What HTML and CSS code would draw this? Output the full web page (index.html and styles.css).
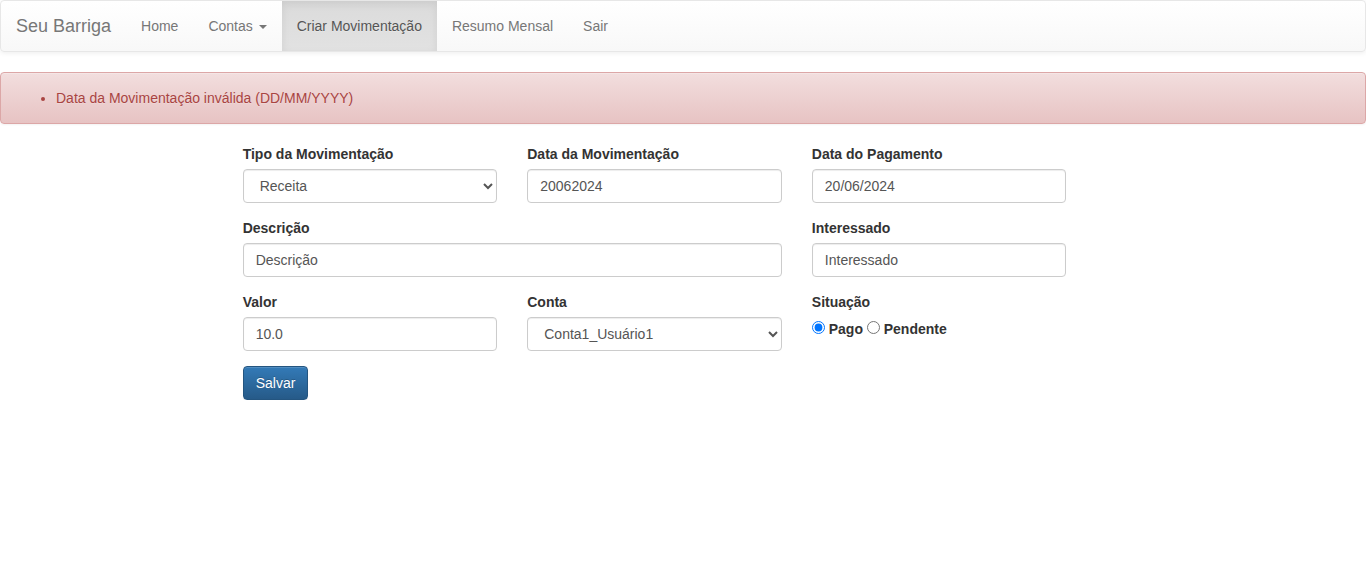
FILE: index.html
```html
<!DOCTYPE html>
<html lang="pt-BR">
<head>
<meta charset="utf-8">
<meta name="viewport" content="width=device-width, initial-scale=1">
<title>Seu Barriga - Movimentações</title>
<link rel="stylesheet" href="styles.css">
</head>
<body>
<nav class="navbar">
  <a class="brand" href="#">Seu Barriga</a>
  <ul class="nav">
    <li><a class="nav-link" href="#">Home</a></li>
    <li><a class="nav-link" href="#">Contas <span class="caret"></span></a></li>
    <li><a class="nav-link active" href="#" aria-current="page">Criar Movimentação</a></li>
    <li><a class="nav-link" href="#">Resumo Mensal</a></li>
    <li><a class="nav-link" href="#">Sair</a></li>
  </ul>
</nav>
<div class="alert" role="alert">
  <ul class="alert-list">
    <li>Data da Movimentação inválida (DD/MM/YYYY)</li>
  </ul>
</div>
<form class="form">
  <div class="field">
    <label class="label" for="tipo">Tipo da Movimentação</label>
    <select class="control" id="tipo"><option selected>Receita</option><option>Despesa</option></select>
  </div>
  <div class="field">
    <label class="label" for="data_transacao">Data da Movimentação</label>
    <input class="control" type="text" id="data_transacao" value="20062024">
  </div>
  <div class="field">
    <label class="label" for="data_pagamento">Data do Pagamento</label>
    <input class="control" type="text" id="data_pagamento" value="20/06/2024">
  </div>
  <div class="field field-wide">
    <label class="label" for="descricao">Descrição</label>
    <input class="control" type="text" id="descricao" value="Descrição">
  </div>
  <div class="field">
    <label class="label" for="interessado">Interessado</label>
    <input class="control" type="text" id="interessado" value="Interessado">
  </div>
  <div class="field">
    <label class="label" for="valor">Valor</label>
    <input class="control" type="text" id="valor" value="10.0">
  </div>
  <div class="field">
    <label class="label" for="conta">Conta</label>
    <select class="control" id="conta"><option>Conta1_Usuário1</option></select>
  </div>
  <div class="field" role="radiogroup" aria-labelledby="situacao">
    <span class="label" id="situacao">Situação</span>
    <div class="radios">
      <input class="radio" type="radio" name="status" id="status_pago" checked>
      <label class="radio-label" for="status_pago">Pago</label>
      <input class="radio" type="radio" name="status" id="status_pendente">
      <label class="radio-label" for="status_pendente">Pendente</label>
    </div>
  </div>
  <div class="actions">
    <button class="btn" type="submit">Salvar</button>
  </div>
</form>
</body>
</html>
```
FILE: styles.css
```css
* {
  box-sizing: border-box;
}

body {
  margin: 0;
  background: #fff;
  color: #333;
  font-family: "Liberation Sans", Arial, sans-serif;
  font-size: 14px;
  line-height: 20px;
}

.navbar {
  display: flex;
  margin-bottom: 20px;
  border: 1px solid #e7e7e7;
  border-radius: 4px;
  background: linear-gradient(#fff, #f8f8f8);
  box-shadow: inset 0 1px 0 rgba(255, 255, 255, .15), 0 1px 5px rgba(0, 0, 0, .075);
}

.brand {
  padding: 15px;
  color: #777;
  font-size: 18px;
  text-decoration: none;
  text-shadow: 0 1px 0 rgba(255, 255, 255, .25);
}

.nav {
  display: flex;
  margin: 0;
  padding: 0;
  list-style: none;
}

.nav-link {
  display: block;
  padding: 15px;
  color: #777;
  text-decoration: none;
  text-shadow: 0 1px 0 rgba(255, 255, 255, .25);
}

.nav-link.active {
  background: linear-gradient(#dbdbdb, #e2e2e2);
  box-shadow: inset 0 3px 9px rgba(0, 0, 0, .075);
  color: #555;
}

.caret {
  display: inline-block;
  margin-left: 2px;
  border-top: 4px solid;
  border-right: 4px solid transparent;
  border-left: 4px solid transparent;
  vertical-align: middle;
}

.alert {
  margin-bottom: 20px;
  padding: 15px;
  border: 1px solid #dca7a7;
  border-radius: 4px;
  background: linear-gradient(#f2dede, #e7c3c3);
  box-shadow: inset 0 1px 0 rgba(255, 255, 255, .25), 0 1px 2px rgba(0, 0, 0, .05);
  color: #a94442;
  text-shadow: 0 1px 0 rgba(255, 255, 255, .2);
}

.alert-list {
  margin: 0;
  padding-left: 40px;
}

.form {
  display: grid;
  grid-template-columns: repeat(3, 1fr);
  gap: 15px 30px;
  width: 62.5%;
  margin-left: calc(100% / 6);
  padding: 0 15px;
}

.field {
  min-width: 0;
}

.field-wide {
  grid-column: span 2;
}

.label {
  display: block;
  margin-bottom: 5px;
  font-weight: bold;
}

.control {
  display: block;
  width: 100%;
  height: 34px;
  padding: 6px 12px;
  border: 1px solid #ccc;
  border-radius: 4px;
  background-color: #fff;
  box-shadow: inset 0 1px 1px rgba(0, 0, 0, .075);
  color: #555;
  font: inherit;
}

.radio {
  margin: 4px 0 0;
}

.radio-label {
  display: inline-block;
  font-weight: bold;
}

.actions {
  grid-column: 1 / -1;
}

.btn {
  padding: 6px 12px;
  border: 1px solid #245580;
  border-radius: 4px;
  background: linear-gradient(#337ab7, #265a88);
  box-shadow: inset 0 1px 0 rgba(255, 255, 255, .15), 0 1px 1px rgba(0, 0, 0, .075);
  color: #fff;
  font: inherit;
  text-shadow: 0 -1px 0 rgba(0, 0, 0, .2);
  cursor: pointer;
}
```
